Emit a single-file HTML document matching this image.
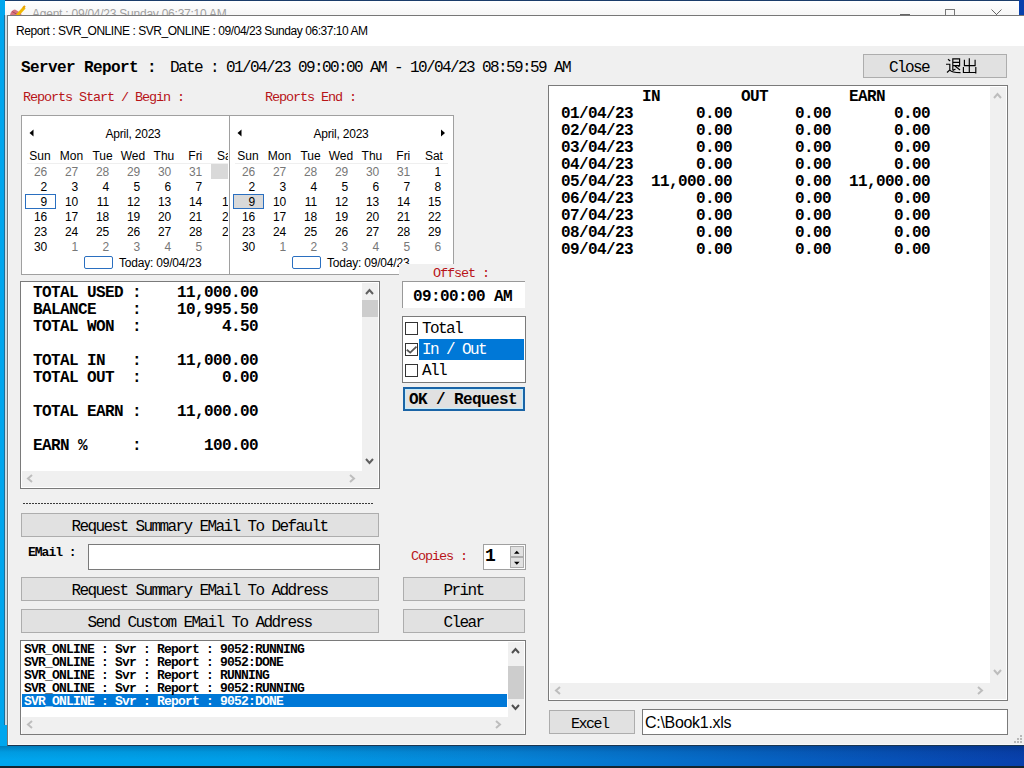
<!DOCTYPE html>
<html><head><meta charset="utf-8">
<style>
*{margin:0;padding:0;box-sizing:border-box}
html,body{width:1024px;height:768px;overflow:hidden;background:#0a4fb0;position:relative;font-family:"Liberation Sans",sans-serif}
.a{position:absolute}
.m{font-family:"Liberation Mono",monospace;white-space:pre}
.btn{background:#e1e1e1;border:1px solid #adadad;text-align:center;color:#000}
.bx{border:1px solid #7a7a7a;background:#fff}
.red{color:#b81418}
.cal{border:1px solid #a0a0a0;background:#fff;overflow:hidden}
.cal .c{position:absolute;font-size:12px;color:#000;text-align:right;width:20px}
.cal .g{color:#777}
.cal .h{position:absolute;font-size:12px;color:#000;text-align:center;width:30px}
.bm{font-size:16px;font-weight:bold;letter-spacing:-0.6px}
.bt{font-size:16px;letter-spacing:-1.6px}
.rl{font-size:13.5px;letter-spacing:-1.1px}
</style></head><body>
<div class="a" style="left:0;top:0;width:1024px;height:768px;background:linear-gradient(90deg,#00a6ee 0%,#009ee8 25%,#0684d8 50%,#0662c2 75%,#0840ac 100%)"></div>
<div class="a" style="left:0px;top:766px;width:1024px;height:2px;background:#142430;"></div>
<div class="a" style="left:5px;top:1px;width:1014px;height:724px;background:linear-gradient(#ffffff,#f6f6f6 14px,#f0f0f0)"></div>
<div class="a" style="left:5px;top:0px;width:1014px;height:1px;background:#1a3c6a;"></div>
<div class="a" style="left:0;top:0;width:1024px;height:15px;overflow:hidden">
<div class="a" id="agt" style="left:32px;top:7px;font-size:12px;letter-spacing:-0.24px;color:#a0a0a0;white-space:pre">Agent : 09/04/23 Sunday 06:37:10 AM</div>
<svg class="a" style="left:9px;top:5px" width="18" height="12" viewBox="0 0 18 12"><path d="M1 10 Q2 5 6 4.5 L12 8 L13 12 L1 12Z" fill="#d77583"/><path d="M3 6.5 L12 11.5" stroke="#a84858" stroke-width="1"/><path d="M8 10.5 L15.5 2.5" stroke="#f0b800" stroke-width="3"/><path d="M14 3 L16 1" stroke="#e8a000" stroke-width="2"/></svg>
<div class="a" style="left:900px;top:14px;width:10px;height:1px;background:#666"></div>
<div class="a" style="left:945px;top:9px;width:10px;height:10px;border:1px solid #777"></div>
<svg class="a" style="left:991px;top:9px" width="11" height="8"><path d="M0.5 0.5 L6.5 6.5 M10.5 0.5 L4.5 6.5" stroke="#666" stroke-width="1"/></svg>
</div>
<div class="a" style="left:7px;top:15px;width:1017px;height:731px;background:#f0f0f0;border-left:1px solid #777;border-top:1px solid #777;border-bottom:1px solid #1a3550"></div>
<div class="a" style="left:8px;top:46px;width:1px;height:698px;background:#f9f9f9;"></div>
<div class="a" style="left:8px;top:744px;width:1016px;height:1px;background:#f8f8f8;"></div>
<div class="a" style="left:0;top:746px;width:1024px;height:20px;background:linear-gradient(rgba(0,20,60,0.28),rgba(0,20,60,0.08) 6px,rgba(0,0,0,0) 14px)"></div>
<div class="a" style="left:4px;top:15px;width:1px;height:710px;background:#1f6d96;"></div>
<div class="a" style="left:5px;top:15px;width:2px;height:710px;background:#cddce5;"></div>
<div class="a" style="left:8px;top:16px;width:1016px;height:30px;background:#fff;"></div>
<div class="a" style="left:16px;top:24px;font-size:12px;letter-spacing:-0.45px;color:#000;white-space:pre">Report : SVR_ONLINE : SVR_ONLINE : 09/04/23 Sunday 06:37:10 AM</div>
<div class="a" style="left:1020px;top:735px;width:2px;height:2px;background:#b8b8b8;"></div>
<div class="a" style="left:1017px;top:738px;width:2px;height:2px;background:#b8b8b8;"></div>
<div class="a" style="left:1020px;top:738px;width:2px;height:2px;background:#b8b8b8;"></div>
<div class="a" style="left:1014px;top:741px;width:2px;height:2px;background:#b8b8b8;"></div>
<div class="a" style="left:1017px;top:741px;width:2px;height:2px;background:#b8b8b8;"></div>
<div class="a" style="left:1020px;top:741px;width:2px;height:2px;background:#b8b8b8;"></div>
<div class="a m bm" style="left:21px;top:59px">Server Report :</div>
<div class="a m bt" style="left:170px;top:59px">Date : 01/04/23 09:00:00 AM - 10/04/23 08:59:59 AM</div>
<div class="a btn" style="left:863px;top:54px;width:144px;height:24px"></div>
<div class="a m bt" style="left:889px;top:59px">Close</div>
<svg class="a" style="left:945px;top:58px" width="34" height="17" viewBox="0 0 34 17" fill="none" stroke="#000" stroke-width="1.15">
<path d="M3 1.2 L5.2 3"/>
<path d="M1 6.2 H4.8 V12 L2 14.5 M4.8 12 Q6.5 14.6 15.5 14.6"/>
<path d="M7.8 12.5 V0.8 H14.6 V7.6 H7.8 M7.8 4.4 H14.6 M7.8 12.5 L10.5 11 M10 8 L15 12 M13.5 8.8 L15 7.2"/>
<path d="M24.3 0.2 V14.6 M19.4 1.7 V7.6 H30.1 V1.7 M18.4 9 V14.5 H30.8 M30.8 9 V15.5"/>
</svg>
<div class="a m red rl" style="left:23px;top:90px">Reports Start / Begin :</div>
<div class="a m red rl" style="left:265px;top:90px">Reports End :</div>
<div class="a cal" style="left:21px;top:115px;width:209px;height:160px">
<svg class="a" style="left:7px;top:13px" width="6" height="8"><path d="M0.5 4 L4.5 0.5 L4.5 7.5Z" fill="#000"/></svg>
<svg class="a" style="left:210px;top:13px" width="6" height="8"><path d="M5 4 L1 0.5 L1 7.5Z" fill="#000"/></svg>
<div class="a" style="left:61px;top:11px;width:100px;text-align:center;font-size:12px;letter-spacing:-0.2px;color:#000">April, 2023</div>
<div class="h" style="left:3.0px;top:33px">Sun</div>
<div class="h" style="left:34.4px;top:33px">Mon</div>
<div class="h" style="left:65.6px;top:33px">Tue</div>
<div class="h" style="left:95.9px;top:33px">Wed</div>
<div class="h" style="left:126.9px;top:33px">Thu</div>
<div class="h" style="left:158.3px;top:33px">Fri</div>
<div class="h" style="left:188.9px;top:33px">Sat</div>
<div class="a" style="left:5px;top:47px;width:213px;height:1px;background:#efefef"></div>
<div class="c g" style="left:5.3px;top:49.0px">26</div>
<div class="c g" style="left:36.3px;top:49.0px">27</div>
<div class="c g" style="left:67.3px;top:49.0px">28</div>
<div class="c g" style="left:98.3px;top:49.0px">29</div>
<div class="c g" style="left:129.3px;top:49.0px">30</div>
<div class="c g" style="left:160.3px;top:49.0px">31</div>
<div class="a" style="left:189px;top:48px;width:31px;height:15px;background:#d9d9d9"></div>
<div class="c" style="left:5.3px;top:63.9px">2</div>
<div class="c" style="left:36.3px;top:63.9px">3</div>
<div class="c" style="left:67.3px;top:63.9px">4</div>
<div class="c" style="left:98.3px;top:63.9px">5</div>
<div class="c" style="left:129.3px;top:63.9px">6</div>
<div class="c" style="left:160.3px;top:63.9px">7</div>
<div class="c" style="left:193.3px;top:63.9px">8</div>
<div class="a" style="left:3px;top:78px;width:31px;height:15px;border:1px solid #2a6fc0;background:transparent"></div>
<div class="c" style="left:5.3px;top:78.8px">9</div>
<div class="c" style="left:36.3px;top:78.8px">10</div>
<div class="c" style="left:67.3px;top:78.8px">11</div>
<div class="c" style="left:98.3px;top:78.8px">12</div>
<div class="c" style="left:129.3px;top:78.8px">13</div>
<div class="c" style="left:160.3px;top:78.8px">14</div>
<div class="c" style="left:193.3px;top:78.8px">15</div>
<div class="c" style="left:5.3px;top:93.7px">16</div>
<div class="c" style="left:36.3px;top:93.7px">17</div>
<div class="c" style="left:67.3px;top:93.7px">18</div>
<div class="c" style="left:98.3px;top:93.7px">19</div>
<div class="c" style="left:129.3px;top:93.7px">20</div>
<div class="c" style="left:160.3px;top:93.7px">21</div>
<div class="c" style="left:193.3px;top:93.7px">22</div>
<div class="c" style="left:5.3px;top:108.6px">23</div>
<div class="c" style="left:36.3px;top:108.6px">24</div>
<div class="c" style="left:67.3px;top:108.6px">25</div>
<div class="c" style="left:98.3px;top:108.6px">26</div>
<div class="c" style="left:129.3px;top:108.6px">27</div>
<div class="c" style="left:160.3px;top:108.6px">28</div>
<div class="c" style="left:193.3px;top:108.6px">29</div>
<div class="c" style="left:5.3px;top:123.5px">30</div>
<div class="c g" style="left:36.3px;top:123.5px">1</div>
<div class="c g" style="left:67.3px;top:123.5px">2</div>
<div class="c g" style="left:98.3px;top:123.5px">3</div>
<div class="c g" style="left:129.3px;top:123.5px">4</div>
<div class="c g" style="left:160.3px;top:123.5px">5</div>
<div class="c g" style="left:193.3px;top:123.5px">6</div>
<div class="a" style="left:62px;top:140px;width:29px;height:13px;border:1px solid #2a6fc0;border-radius:2px"></div>
<div class="a" style="left:97px;top:140px;font-size:12px;letter-spacing:-0.2px;color:#000;white-space:pre">Today: 09/04/23</div>
</div>
<div class="a" style="left:228px;top:116px;width:1px;height:158px;background:#fff;"></div>
<div class="a cal" style="left:229px;top:115px;width:225px;height:160px">
<svg class="a" style="left:7px;top:13px" width="6" height="8"><path d="M0.5 4 L4.5 0.5 L4.5 7.5Z" fill="#000"/></svg>
<svg class="a" style="left:210px;top:13px" width="6" height="8"><path d="M5 4 L1 0.5 L1 7.5Z" fill="#000"/></svg>
<div class="a" style="left:61px;top:11px;width:100px;text-align:center;font-size:12px;letter-spacing:-0.2px;color:#000">April, 2023</div>
<div class="h" style="left:3.0px;top:33px">Sun</div>
<div class="h" style="left:34.4px;top:33px">Mon</div>
<div class="h" style="left:65.6px;top:33px">Tue</div>
<div class="h" style="left:95.9px;top:33px">Wed</div>
<div class="h" style="left:126.9px;top:33px">Thu</div>
<div class="h" style="left:158.3px;top:33px">Fri</div>
<div class="h" style="left:188.9px;top:33px">Sat</div>
<div class="a" style="left:5px;top:47px;width:213px;height:1px;background:#efefef"></div>
<div class="c g" style="left:5.3px;top:49.0px">26</div>
<div class="c g" style="left:36.3px;top:49.0px">27</div>
<div class="c g" style="left:67.3px;top:49.0px">28</div>
<div class="c g" style="left:98.3px;top:49.0px">29</div>
<div class="c g" style="left:129.3px;top:49.0px">30</div>
<div class="c g" style="left:160.3px;top:49.0px">31</div>
<div class="c" style="left:191.3px;top:49.0px">1</div>
<div class="c" style="left:5.3px;top:63.9px">2</div>
<div class="c" style="left:36.3px;top:63.9px">3</div>
<div class="c" style="left:67.3px;top:63.9px">4</div>
<div class="c" style="left:98.3px;top:63.9px">5</div>
<div class="c" style="left:129.3px;top:63.9px">6</div>
<div class="c" style="left:160.3px;top:63.9px">7</div>
<div class="c" style="left:191.3px;top:63.9px">8</div>
<div class="a" style="left:3px;top:78px;width:31px;height:15px;border:1px solid #2a6fc0;background:#d9d9d9"></div>
<div class="c" style="left:5.3px;top:78.8px">9</div>
<div class="c" style="left:36.3px;top:78.8px">10</div>
<div class="c" style="left:67.3px;top:78.8px">11</div>
<div class="c" style="left:98.3px;top:78.8px">12</div>
<div class="c" style="left:129.3px;top:78.8px">13</div>
<div class="c" style="left:160.3px;top:78.8px">14</div>
<div class="c" style="left:191.3px;top:78.8px">15</div>
<div class="c" style="left:5.3px;top:93.7px">16</div>
<div class="c" style="left:36.3px;top:93.7px">17</div>
<div class="c" style="left:67.3px;top:93.7px">18</div>
<div class="c" style="left:98.3px;top:93.7px">19</div>
<div class="c" style="left:129.3px;top:93.7px">20</div>
<div class="c" style="left:160.3px;top:93.7px">21</div>
<div class="c" style="left:191.3px;top:93.7px">22</div>
<div class="c" style="left:5.3px;top:108.6px">23</div>
<div class="c" style="left:36.3px;top:108.6px">24</div>
<div class="c" style="left:67.3px;top:108.6px">25</div>
<div class="c" style="left:98.3px;top:108.6px">26</div>
<div class="c" style="left:129.3px;top:108.6px">27</div>
<div class="c" style="left:160.3px;top:108.6px">28</div>
<div class="c" style="left:191.3px;top:108.6px">29</div>
<div class="c" style="left:5.3px;top:123.5px">30</div>
<div class="c g" style="left:36.3px;top:123.5px">1</div>
<div class="c g" style="left:67.3px;top:123.5px">2</div>
<div class="c g" style="left:98.3px;top:123.5px">3</div>
<div class="c g" style="left:129.3px;top:123.5px">4</div>
<div class="c g" style="left:160.3px;top:123.5px">5</div>
<div class="c g" style="left:191.3px;top:123.5px">6</div>
<div class="a" style="left:62px;top:140px;width:29px;height:13px;border:1px solid #2a6fc0;border-radius:2px"></div>
<div class="a" style="left:97px;top:140px;font-size:12px;letter-spacing:-0.2px;color:#000;white-space:pre">Today: 09/04/23</div>
</div>
<div class="a bx" style="left:20px;top:281px;width:360px;height:208px"></div>
<div class="a m bm" style="left:33px;top:285px;line-height:17px">TOTAL USED :    11,000.00
BALANCE    :    10,995.50
TOTAL WON  :         4.50

TOTAL IN   :    11,000.00
TOTAL OUT  :         0.00

TOTAL EARN :    11,000.00

EARN %     :       100.00</div>
<div class="a" style="left:362px;top:283px;width:16px;height:188px;background:#f0f0f0;"></div>
<div class="a" style="left:22px;top:471px;width:356px;height:16px;background:#f0f0f0;"></div>
<div class="a" style="left:362px;top:300px;width:16px;height:17px;background:#cdcdcd;"></div>
<svg class="a" style="left:364px;top:288px" width="11" height="8"><path d="M2 6 L5.5 2 L9 6" fill="none" stroke="#606060" stroke-width="2"/></svg>
<svg class="a" style="left:364px;top:457px" width="11" height="8"><path d="M2 2 L5.5 6 L9 2" fill="none" stroke="#606060" stroke-width="2"/></svg>
<svg class="a" style="left:26px;top:473px" width="8" height="11"><path d="M6 2 L2 5.5 L6 9" fill="none" stroke="#bdbdbd" stroke-width="2"/></svg>
<svg class="a" style="left:348px;top:473px" width="8" height="11"><path d="M2 2 L6 5.5 L2 9" fill="none" stroke="#bdbdbd" stroke-width="2"/></svg>
<div class="a" style="left:399px;top:264px;width:60px;height:18px;background:#f0f0f0;"></div>
<div class="a m red rl" style="left:433px;top:266px">Offset :</div>
<div class="a" style="left:402px;top:281px;width:123px;height:27px;background:#fff;border-left:1px solid #999;border-top:1px solid #999"></div>
<div class="a m bm" style="left:413px;top:288px">09:00:00 AM</div>
<div class="a bx" style="left:402px;top:316px;width:124px;height:67px"></div>
<div class="a" style="left:419px;top:339px;width:105px;height:21px;background:#0078d7;"></div>
<div class="a" style="left:405px;top:322.0px;width:13px;height:13px;border:1px solid #333;background:#fff"></div>
<div class="a m bt" style="left:422px;top:319.5px;color:#000">Total</div>
<div class="a" style="left:405px;top:343.0px;width:13px;height:13px;border:1px solid #333;background:#fff"></div>
<svg class="a" style="left:405px;top:343.0px" width="13" height="13"><path d="M1.8 6.8 L5.2 9.6 L11.5 3.6" fill="none" stroke="#555" stroke-width="1.8"/></svg>
<div class="a m bt" style="left:422px;top:340.5px;color:#fff">In / Out</div>
<div class="a" style="left:405px;top:364.0px;width:13px;height:13px;border:1px solid #333;background:#fff"></div>
<div class="a m bt" style="left:422px;top:361.5px;color:#000">All</div>
<div class="a" style="left:403px;top:387px;width:122px;height:24px;background:#e1e1e1;border:2px solid #1a64a6;box-shadow:inset 0 0 0 1px #c4ecfc"></div>
<div class="a m bm" style="left:409px;top:391px">OK / Request</div>
<div class="a bx" style="left:548px;top:85px;width:460px;height:616px"></div>
<div class="a m bm" style="left:561px;top:89px;line-height:17px">         IN         OUT         EARN
01/04/23       0.00       0.00       0.00
02/04/23       0.00       0.00       0.00
03/04/23       0.00       0.00       0.00
04/04/23       0.00       0.00       0.00
05/04/23  11,000.00       0.00  11,000.00
06/04/23       0.00       0.00       0.00
07/04/23       0.00       0.00       0.00
08/04/23       0.00       0.00       0.00
09/04/23       0.00       0.00       0.00</div>
<div class="a" style="left:990px;top:87px;width:16px;height:596px;background:#f0f0f0;"></div>
<div class="a" style="left:550px;top:683px;width:456px;height:16px;background:#f0f0f0;"></div>
<svg class="a" style="left:992px;top:92px" width="11" height="8"><path d="M2 6 L5.5 2 L9 6" fill="none" stroke="#bdbdbd" stroke-width="2"/></svg>
<svg class="a" style="left:992px;top:668px" width="11" height="8"><path d="M2 2 L5.5 6 L9 2" fill="none" stroke="#bdbdbd" stroke-width="2"/></svg>
<svg class="a" style="left:554px;top:685px" width="8" height="11"><path d="M6 2 L2 5.5 L6 9" fill="none" stroke="#bdbdbd" stroke-width="2"/></svg>
<svg class="a" style="left:976px;top:685px" width="8" height="11"><path d="M2 2 L6 5.5 L2 9" fill="none" stroke="#bdbdbd" stroke-width="2"/></svg>
<div class="a" style="left:23px;top:503px;width:351px;height:1px;background:repeating-linear-gradient(90deg,#3a3a3a 0 2px,transparent 2px 3px)"></div>
<div class="a btn m bt" style="left:21px;top:513px;width:358px;height:24px;line-height:26px;padding-right:1px">Request Summary EMail To Default</div>
<div class="a m" style="left:28px;top:545px;font-size:13px;font-weight:bold;letter-spacing:-1px">EMail :</div>
<div class="a bx" style="left:88px;top:544px;width:292px;height:26px"></div>
<div class="a m red rl" style="left:411px;top:549px">Copies :</div>
<div class="a" style="left:483px;top:544px;width:43px;height:26px;background:#fff;border:1px solid #a0a0a0"></div>
<div class="a m" style="left:485px;top:546px;font-size:18px;font-weight:bold">1</div>
<div class="a" style="left:510px;top:546px;width:14px;height:11px;background:#e1e1e1;border:1px solid #adadad"></div>
<div class="a" style="left:510px;top:557px;width:14px;height:11px;background:#e1e1e1;border:1px solid #adadad"></div>
<svg class="a" style="left:513px;top:550px" width="8" height="5"><path d="M1 3.8 L3.8 0.8 L6.6 3.8Z" fill="#000"/></svg>
<svg class="a" style="left:513px;top:561px" width="8" height="5"><path d="M1 0.8 L3.8 3.8 L6.6 0.8Z" fill="#000"/></svg>
<div class="a btn m bt" style="left:21px;top:577px;width:358px;height:24px;line-height:26px;padding-right:1px">Request Summary EMail To Address</div>
<div class="a btn m bt" style="left:403px;top:577px;width:122px;height:24px;line-height:26px;padding-right:1px">Print</div>
<div class="a btn m bt" style="left:21px;top:609px;width:358px;height:24px;line-height:26px;padding-right:1px">Send Custom EMail To Address</div>
<div class="a btn m bt" style="left:403px;top:609px;width:122px;height:24px;line-height:26px;padding-right:1px">Clear</div>
<div class="a bx" style="left:20px;top:640px;width:506px;height:95px"></div>
<div class="a" style="left:22px;top:694px;width:485px;height:13px;background:#0078d7;"></div>
<div class="a m" style="left:24px;top:643px;font-size:13px;font-weight:bold;letter-spacing:-0.8px;line-height:13px">SVR_ONLINE : Svr : Report : 9052:RUNNING
SVR_ONLINE : Svr : Report : 9052:DONE
SVR_ONLINE : Svr : Report : RUNNING
SVR_ONLINE : Svr : Report : 9052:RUNNING
<span style="color:#fff">SVR_ONLINE : Svr : Report : 9052:DONE</span></div>
<div class="a" style="left:508px;top:642px;width:16px;height:92px;background:#f0f0f0;"></div>
<div class="a" style="left:22px;top:717px;width:486px;height:17px;background:#f0f0f0;"></div>
<div class="a" style="left:508px;top:666px;width:16px;height:33px;background:#cdcdcd;"></div>
<svg class="a" style="left:510px;top:647px" width="11" height="8"><path d="M2 6 L5.5 2 L9 6" fill="none" stroke="#505050" stroke-width="2"/></svg>
<svg class="a" style="left:510px;top:703px" width="11" height="8"><path d="M2 2 L5.5 6 L9 2" fill="none" stroke="#505050" stroke-width="2"/></svg>
<svg class="a" style="left:26px;top:719px" width="8" height="11"><path d="M6 2 L2 5.5 L6 9" fill="none" stroke="#bdbdbd" stroke-width="2"/></svg>
<svg class="a" style="left:494px;top:719px" width="8" height="11"><path d="M2 2 L6 5.5 L2 9" fill="none" stroke="#bdbdbd" stroke-width="2"/></svg>
<div class="a btn m bt" style="left:549px;top:710px;width:86px;height:24px;line-height:26px;padding-right:1px"></div>
<div class="a m" style="left:571px;top:716px;font-size:15px;letter-spacing:-1.5px">Excel</div>
<div class="a bx" style="left:642px;top:709px;width:366px;height:26px"></div>
<div class="a" style="left:645px;top:714px;font-size:16px;letter-spacing:-0.3px;color:#000;white-space:pre">C:\Book1.xls</div>
</body></html>
